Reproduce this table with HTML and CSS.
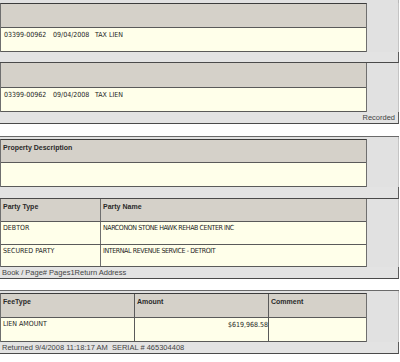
FILE: index.html
```html
<!DOCTYPE html>
<html>
<head>
<meta charset="utf-8">
<link rel="stylesheet" href="styles.css">
</head>
<body>
<div class="sec first">
  <div class="strip"></div>
  <div class="row">
    <div class="tbl">
      <div class="tr hd h23"><div class="td full"></div></div>
      <div class="tr bd h23"><div class="td full data"><span class="c1">03399-00962</span><span class="c2">09/04/2008</span><span class="c3">TAX LIEN</span></div></div>
    </div>
    <div class="side"></div>
  </div>
  <div class="band h10"></div>
  <div class="row">
    <div class="tbl notop">
      <div class="tr hd h24"><div class="td full"></div></div>
      <div class="tr bd h23"><div class="td full data"><span class="c1">03399-00962</span><span class="c2">09/04/2008</span><span class="c3">TAX LIEN</span></div></div>
    </div>
    <div class="side"></div>
  </div>
  <div class="band right">Recorded</div>
</div>

<div class="sec">
  <div class="strip"></div>
  <div class="row">
    <div class="tbl">
      <div class="tr hd h22"><div class="td full head">Property Description</div></div>
      <div class="tr bd h23"><div class="td full"></div></div>
    </div>
    <div class="side"></div>
  </div>
  <div class="band"></div>
  <div class="row">
    <div class="tbl notop">
      <div class="tr hd h22"><div class="td w100 head">Party Type</div><div class="td full head">Party Name</div></div>
      <div class="tr bd h22"><div class="td w100 data">DEBTOR</div><div class="td full data name">NARCONON STONE HAWK REHAB CENTER INC</div></div>
      <div class="tr bd h21"><div class="td w100 data">SECURED PARTY</div><div class="td full data name">INTERNAL REVENUE SERVICE - DETROIT</div></div>
    </div>
    <div class="side"></div>
  </div>
  <div class="band">Book / Page# Pages1Return Address</div>
</div>

<div class="sec">
  <div class="strip"></div>
  <div class="row">
    <div class="tbl">
      <div class="tr hd h23"><div class="td w134 head">FeeType</div><div class="td w134 head">Amount</div><div class="td full head">Comment</div></div>
      <div class="tr bd h23"><div class="td w134 data">LIEN AMOUNT</div><div class="td w134 data amt">$619,968.58</div><div class="td full"></div></div>
    </div>
    <div class="side"></div>
  </div>
  <div class="band">Returned 9/4/2008 11:18:17 AM&nbsp; SERIAL # 465304408</div>
</div>
</body>
</html>
```

FILE: styles.css
```css
html, body {
  margin: 0;
  padding: 0;
  background: #ffffff;
}
body {
  width: 400px;
  font-family: "Liberation Sans", Arial, sans-serif;
  color: #222;
}
.sec {
  width: 399px;
  box-sizing: border-box;
  background: #e1e1e1;
  border-top: 1px solid #6a6a6a;
  margin-bottom: 11px;
}
.sec.first {
  border-top: none;
  margin-bottom: 12px;
}
.strip {
  height: 2px;
  border-right: 1px solid #b8b8b8;
}
.first .strip {
  height: 3px;
}
.row {
  display: grid;
  grid-template-columns: 367px 1fr;
}
.side {
  background: #e1e1e1;
  border-right: 1px solid #c4c4c4;
}
.tbl {
  border-left: 1px solid #6f6f6f;
  border-right: 1px solid #6f6f6f;
  border-top: 1px solid #3c3c3c;
  box-sizing: border-box;
}
.tbl.notop {
  border-top: none;
}
.tr {
  display: flex;
  border-bottom: 1px solid #5a5a5a;
}
.hd { background: #d5d1c9; }
.bd { background: #ffffea; }
.h21 { height: 21px; }
.h22 { height: 22px; }
.h23 { height: 23px; }
.h24 { height: 24px; }
.td {
  box-sizing: border-box;
  overflow: hidden;
  white-space: nowrap;
}
.td.full { flex: 1; }
.td.w100 { width: 100px; border-right: 1px solid #6f6f6f; }
.td.w134 { width: 134px; border-right: 1px solid #5a5a5a; }
.head {
  font-weight: bold;
  font-size: 7px;
  line-height: 9px;
  padding: 3px 0 0 2px;
  color: #2a2a2a;
}
.data {
  font-family: "Liberation Sans Narrow", "DejaVu Sans Condensed", "Liberation Sans", sans-serif;
  font-size: 7px;
  line-height: 9px;
  padding: 2px 0 0 2px;
  color: #1e1e1e;
}
.data.name {
  letter-spacing: -0.4px;
}
.bd .td.full.data:first-child {
  padding: 3px 0 0 3px;
}
.c1 { display: inline-block; width: 49px; }
.c2 { display: inline-block; width: 42px; }
.amt {
  text-align: right;
  padding: 3px 0 0 0;
}
.band {
  height: 11px;
  box-sizing: content-box;
  border-right: 1px solid #5c5c5c;
  border-bottom: 1px solid #4a4a4a;
  background: #e3e3e3;
  font-size: 7.5px;
  line-height: 11px;
  padding-left: 2px;
  color: #444;
  white-space: nowrap;
}
.band.h10 { height: 10px; }
.band.right {
  text-align: right;
  padding-left: 0;
  padding-right: 3px;
}
```
